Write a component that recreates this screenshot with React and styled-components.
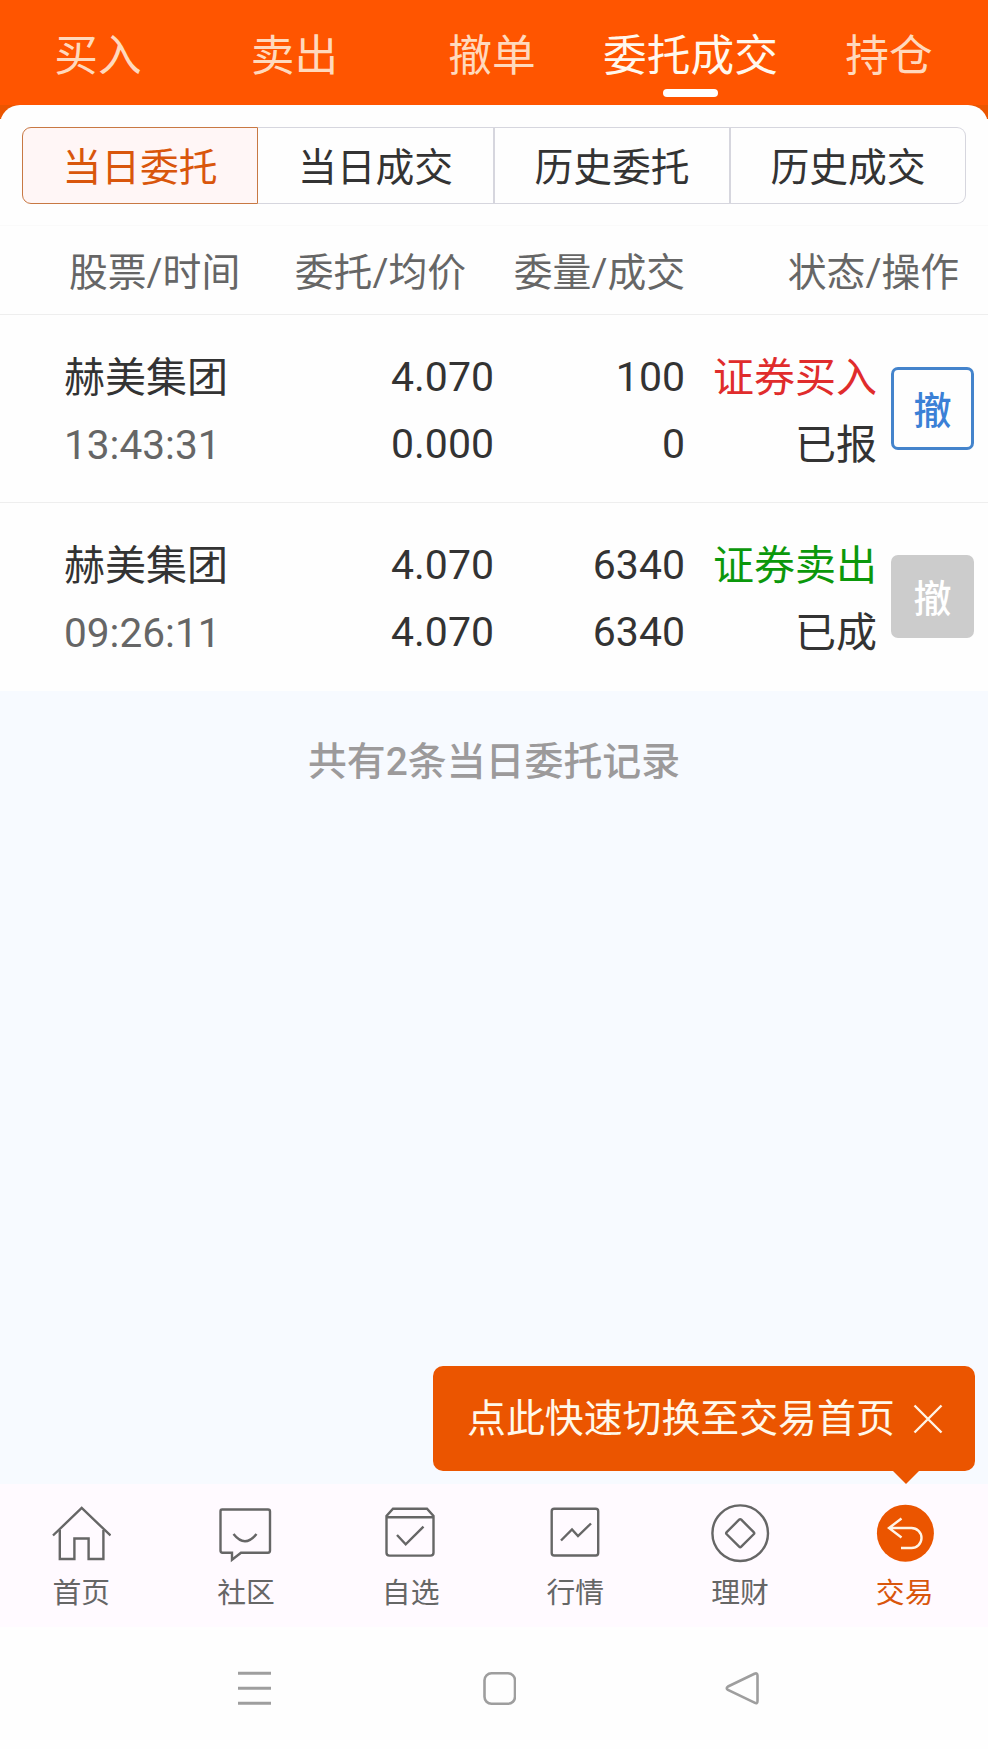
import React, { useState } from 'react'
import styled, { createGlobalStyle } from 'styled-components'

const orange = '#eb5500'

const GlobalStyle = createGlobalStyle`
  * {
    box-sizing: border-box;
  }
  body {
    margin: 0;
    background: #fefefe;
    font-family: Roboto, 'Noto Sans CJK SC', sans-serif;
    color: #333;
  }
  button {
    font-family: inherit;
    padding: 0;
    border: 0;
    background: none;
    color: inherit;
  }
`
const Page = styled.div`
  display: flex;
  flex-direction: column;
  width: 988px;
  height: 1749px;
  overflow: hidden;
`
const TopTabs = styled.nav`
  display: grid;
  grid-template-columns: 196px 197px 198px 199px 198px;
  height: 105px;
  flex: none;
  background: #ff5500;
`
const TopTab = styled.button`
  display: flex;
  flex-direction: column;
  align-items: center;
  padding-top: 26px;
  font-size: 43.7px;
  line-height: 60px;
  white-space: nowrap;
  color: ${props => (props.$active ? '#fff8ee' : '#ffd9bd')};
  &::after {
    content: '';
    width: 55px;
    height: 8px;
    margin-top: 3px;
    border-radius: 4px;
    background: ${props => (props.$active ? '#fff' : 'transparent')};
  }
`
const PanelBack = styled.div`
  flex: none;
  background: linear-gradient(${orange} 14px, #fefefe 14px);
`
const Panel = styled.section`
  height: 121px;
  padding: 22px 22px 0;
  border-radius: 20px 20px 0 0;
  background: #fefefe;
  border-bottom: 1px solid #fafafa;
`
const Segments = styled.div`
  display: grid;
  grid-template-columns: 236px 237px 236px 235px;
  height: 77px;
`
const Segment = styled.button`
  padding-top: 5px;
  border: 1px solid ${props => (props.$active ? '#c87843' : '#d6d6de')};
  border-left-width: ${props => (props.$active ? 1 : 0)}px;
  border-right-width: ${props => (props.$last || props.$active ? 1 : 2)}px;
  background: ${props => (props.$active ? '#fff6f6' : '#fefefe')};
  color: ${props => (props.$active ? '#d9560c' : '#333')};
  font-size: 38.8px;
  line-height: 60px;
  &:first-child {
    border-radius: 9px 0 0 9px;
  }
  &:last-child {
    border-radius: 0 9px 9px 0;
  }
`
const columns = '64px 176px 254px 191px 192px 97px'

const TableHead = styled.div`
  display: grid;
  grid-template-columns: 69px 171px 226px 219px 274px;
  align-items: center;
  flex: none;
  height: 89px;
  padding-top: 5px;
  border-bottom: 1px solid #eee;
  font-size: 38.8px;
  line-height: 60px;
  white-space: nowrap;
  color: #666;
`
const HeadCell = styled.span`
  text-align: right;
  &:first-child {
    grid-column: 2;
  }
`
const Row = styled.div`
  display: grid;
  grid-template-columns: ${columns};
  flex: none;
  height: 188px;
  padding-top: 27px;
  border-bottom: 1px solid ${props => (props.$last ? '#fefefe' : '#eee')};
  font-size: 41px;
  line-height: 67px;
  white-space: nowrap;
`
const Cell = styled.div`
  display: flex;
  flex-direction: column;
  align-items: ${props => (props.$left ? 'flex-start' : 'flex-end')};
  padding-top: ${props => (props.$cjk ? 3 : 2)}px;
  &:first-child {
    grid-column: 2;
  }
`
const Time = styled.span`
  font-size: 40.6px;
  color: #666;
`
const Side = styled.span`
  color: ${props => (props.$buy ? '#e02c2c' : '#0b980b')};
`
const CancelButton = styled.button`
  width: 83px;
  height: 83px;
  margin: 25px 0 0 14px;
  padding-top: 5px;
  border: 3px solid #4484cc;
  border-radius: 7px;
  color: #3b80d6;
  font-size: 38px;
  font-weight: 500;
  line-height: 60px;
  &:disabled {
    border-color: #ccc;
    background: #ccc;
    color: #fff;
  }
`
const Content = styled.main`
  flex: 1;
  display: flex;
  flex-direction: column;
  justify-content: space-between;
  background: #f7faff;
`
const Summary = styled.p`
  margin: 41px 0 0;
  font-size: 38.9px;
  font-weight: 500;
  line-height: 60px;
  text-align: center;
  color: #9c9a9b;
`
const Tip = styled.div`
  position: relative;
  display: flex;
  align-items: center;
  align-self: flex-end;
  width: 542px;
  height: 105px;
  margin: 0 13px 13px 0;
  padding-left: 34px;
  border-radius: 10px;
  background: ${orange};
  color: #fff8ea;
  font-size: 38.9px;
  line-height: 60px;
  white-space: nowrap;
  &::after {
    content: '';
    position: absolute;
    top: 104px;
    right: 55px;
    border: 14px solid transparent;
    border-top-color: ${orange};
    border-bottom: 0;
  }
`
const TipClose = styled.button`
  display: flex;
  margin-left: 17px;
`
const BottomNav = styled.nav`
  display: grid;
  grid-template-columns: repeat(6, 1fr);
  flex: none;
  height: 143px;
  background: #fffaff;
`
const NavItem = styled.button`
  display: flex;
  flex-direction: column;
  align-items: center;
  padding: 19px 2px 0 0;
  font-size: 28.8px;
  line-height: 40px;
  color: ${props => (props.$active ? '#d9560c' : '#666')};
`
const NavIcon = styled.svg`
  display: block;
  width: 60px;
  height: 60px;
  margin-bottom: 10px;
  fill: none;
  stroke: #666;
  stroke-width: 2.4px;
`
const SystemBar = styled.footer`
  display: flex;
  flex: none;
  height: 122px;
  padding: 43px 0 0 236px;
  gap: 208px;
  background: #fefefe;
`
const SystemIcon = styled.svg`
  display: block;
  width: 36px;
  height: 36px;
  fill: none;
  stroke: #9e9e9e;
  stroke-width: 2.6px;
`

const topTabs = ['买入', '卖出', '撤单', '委托成交', '持仓']
const segments = ['当日委托', '当日成交', '历史委托', '历史成交']
const headings = ['股票/时间', '委托/均价', '委量/成交', '状态/操作']

const orders = [
  {
    name: '赫美集团',
    time: '13:43:31',
    price: '4.070',
    average: '0.000',
    amount: '100',
    filled: '0',
    side: '证券买入',
    status: '已报',
    buy: true,
    open: true,
  },
  {
    name: '赫美集团',
    time: '09:26:11',
    price: '4.070',
    average: '4.070',
    amount: '6340',
    filled: '6340',
    side: '证券卖出',
    status: '已成',
    buy: false,
    open: false,
  },
]

const navItems = [
  {
    label: '首页',
    icon: (
      <React.Fragment>
        <path d="M2 32.5 30.7 5 59.5 32.5" />
        <path d="M8.8 27V56H23.4V35.5H37.6V56H52.4V27" />
      </React.Fragment>
    ),
  },
  {
    label: '社区',
    icon: (
      <React.Fragment>
        <path d="M5.5 6.5H52Q54 6.5 54 8.5V47.5Q54 49.7 52 49.7H25L16 56.7V49.7H6.5Q4.5 49.7 4.5 47.5V8.5Q4.5 6.5 6 6.5Z" />
        <path d="M17.5 31Q29 45.5 40.5 31" />
      </React.Fragment>
    ),
  },
  {
    label: '自选',
    icon: (
      <React.Fragment>
        <path d="M12 5.7H46L52.5 13V49.7Q52.5 52.6 49.5 52.6H8.5Q5.5 52.6 5.5 49.7V13Z" />
        <path d="M5.5 14.3H52.5M16 32 24.7 41.3 42.5 23.7" />
      </React.Fragment>
    ),
  },
  {
    label: '行情',
    icon: (
      <React.Fragment>
        <rect x="6.7" y="5.7" width="46.5" height="46.8" rx="2.5" />
        <path d="M16 37.5 27 26.5 33 33 46 20.5" />
      </React.Fragment>
    ),
  },
  {
    label: '理财',
    icon: (
      <React.Fragment>
        <circle cx="30.2" cy="30.2" r="27.8" />
        <rect x="19.9" y="19.9" width="20.6" height="20.6" rx="1.5" transform="rotate(45 30.2 30.2)" />
      </React.Fragment>
    ),
  },
  {
    label: '交易',
    icon: (
      <React.Fragment>
        <circle cx="30.4" cy="30.2" r="28.5" fill={orange} stroke="none" />
        <path d="M26.5 15.5 14 25 26.5 34.5M14.5 25H36.5A10 10 0 0 1 36.5 45H26" stroke="#fff4e6" />
      </React.Fragment>
    ),
  },
]

const OrderRow = ({ order, last }) => (
  <Row $last={last}>
    <Cell $left $cjk>
      <span>{order.name}</span>
      <Time>{order.time}</Time>
    </Cell>
    <Cell>
      <span>{order.price}</span>
      <span>{order.average}</span>
    </Cell>
    <Cell>
      <span>{order.amount}</span>
      <span>{order.filled}</span>
    </Cell>
    <Cell $cjk>
      <Side $buy={order.buy}>{order.side}</Side>
      <span>{order.status}</span>
    </Cell>
    <CancelButton disabled={!order.open}>撤</CancelButton>
  </Row>
)

const App = () => {
  const [topTab, setTopTab] = useState(3)
  const [segment, setSegment] = useState(0)
  const [navItem, setNavItem] = useState(5)

  return (
    <Page>
      <GlobalStyle />
      <TopTabs>
        {topTabs.map((label, i) => (
          <TopTab key={label} $active={i === topTab} onClick={() => setTopTab(i)}>
            {label}
          </TopTab>
        ))}
      </TopTabs>
      <PanelBack>
        <Panel>
          <Segments>
            {segments.map((label, i) => (
              <Segment
                key={label}
                $active={i === segment}
                $last={i === segments.length - 1}
                onClick={() => setSegment(i)}
              >
                {label}
              </Segment>
            ))}
          </Segments>
        </Panel>
      </PanelBack>
      <TableHead>
        {headings.map(label => (
          <HeadCell key={label}>{label}</HeadCell>
        ))}
      </TableHead>
      {orders.map((order, i) => (
        <OrderRow key={order.time} order={order} last={i === orders.length - 1} />
      ))}
      <Content>
        <Summary>共有{orders.length}条当日委托记录</Summary>
        <Tip>
          点此快速切换至交易首页
          <TipClose aria-label="关闭">
            <svg width="32" height="32" fill="none" stroke="#fff4e6" strokeWidth="2.4">
              <path d="M2.5 2.5 29.5 29.5M29.5 2.5 2.5 29.5" />
            </svg>
          </TipClose>
        </Tip>
      </Content>
      <BottomNav>
        {navItems.map((item, i) => (
          <NavItem key={item.label} $active={i === navItem} onClick={() => setNavItem(i)}>
            <NavIcon viewBox="0 0 60 60">{item.icon}</NavIcon>
            {item.label}
          </NavItem>
        ))}
      </BottomNav>
      <SystemBar>
        <SystemIcon viewBox="0 0 36 36">
          <path d="M2 3.3H35M2 18.3H35M2 33.3H35" strokeWidth="3" />
        </SystemIcon>
        <SystemIcon viewBox="0 0 36 36">
          <rect x="4.5" y="3.3" width="30.5" height="30.5" rx="7" />
        </SystemIcon>
        <SystemIcon viewBox="0 0 36 36">
          <path d="M4 16.5 30.5 3.8Q33.5 2.5 33.5 5.5V31Q33.5 34.2 30.5 32.7L4 20Q1.5 18.2 4 16.5Z" />
        </SystemIcon>
      </SystemBar>
    </Page>
  )
}

export default App
